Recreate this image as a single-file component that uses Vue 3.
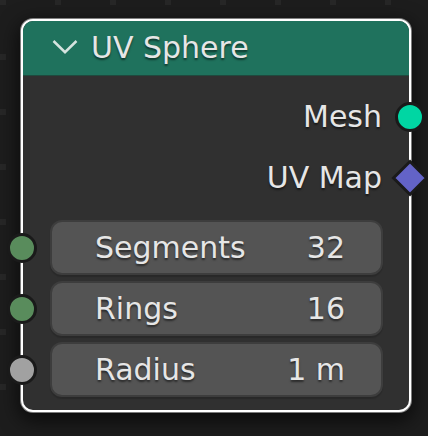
<script setup>
import { ref } from 'vue'

const open = ref(true)
const outputs = [
  { id: 'mesh', label: 'Mesh', shape: 'circle', tone: 'geometry' },
  { id: 'uv-map', label: 'UV Map', shape: 'diamond', tone: 'vector' }
]
const inputs = ref([
  { id: 'segments', label: 'Segments', value: '32', tone: 'integer' },
  { id: 'rings', label: 'Rings', value: '16', tone: 'integer' },
  { id: 'radius', label: 'Radius', value: '1 m', tone: 'float' }
])
</script>

<template>
  <main class="editor">
    <section class="node">
      <button class="header" type="button" :aria-expanded="open" @click="open = !open">
        <svg class="chevron" viewBox="0 0 26 16" aria-hidden="true">
          <path d="M1.5 2 L13 13.2 L24.5 2" />
        </svg>
        <span>UV Sphere</span>
      </button>
      <div v-if="open" class="body">
        <ul class="outputs">
          <li v-for="item in outputs" :key="item.id" class="output">
            <span>{{ item.label }}</span>
            <svg class="socket right" :class="item.tone" viewBox="0 0 38 38" aria-hidden="true">
              <circle v-if="item.shape === 'circle'" cx="19" cy="19" r="13.5" />
              <path v-else d="M19 2.5 L35.5 19 L19 35.5 L2.5 19 Z" />
            </svg>
          </li>
        </ul>
        <div class="inputs">
          <div v-for="item in inputs" :key="item.id" class="row">
            <svg class="socket left" :class="item.tone" viewBox="0 0 38 38" aria-hidden="true">
              <circle cx="19" cy="19" r="13.5" />
            </svg>
            <div class="field">
              <label :for="item.id">{{ item.label }}</label>
              <input :id="item.id" v-model="item.value" type="text" />
            </div>
          </div>
        </div>
      </div>
    </section>
  </main>
</template>

<style>
body {
  background: #1d1d1d;
}
</style>

<style scoped>
.editor {
  box-sizing: border-box;
  min-height: 100vh;
  padding: 19px 17px 24px 21px;
  overflow: hidden;
  background-color: #1d1d1d;
  background-image: conic-gradient(from 0deg at 6px 6px, transparent 270deg, #272727 270deg);
  background-size: 55px 55px;
  background-position: 0 -1px;
  color: #e6e6e6;
  font-family: "DejaVu Sans", sans-serif;
  font-size: 30px;
  text-shadow: 0 2px 2px rgba(0, 0, 0, 0.5);
}

.node {
  border: 2px solid #fff;
  border-radius: 12px;
  background: #303030;
  box-shadow: 0 0 0 1px rgba(255, 255, 255, 0.45), 0 6px 20px 2px rgba(0, 0, 0, 0.7);
}

.header {
  display: flex;
  align-items: center;
  gap: 13px;
  width: 100%;
  height: 54px;
  padding: 0 29px 2px;
  border: 0;
  border-radius: 10px 10px 0 0;
  background: #1f725d;
  box-shadow: 0 1px 0 #1f4a3e;
  color: inherit;
  font: inherit;
  text-align: left;
  text-shadow: inherit;
}

.chevron {
  flex: none;
  width: 26px;
  height: 16px;
  fill: none;
  stroke: #d5e3df;
  stroke-width: 2.5;
}

.body {
  padding: 11px 26px 13px 27px;
}

.outputs {
  margin: 0 0 12px;
  padding: 0;
  list-style: none;
}

.output {
  position: relative;
  display: flex;
  align-items: center;
  justify-content: flex-end;
  height: 61px;
  padding-right: 1px;
}

.inputs {
  display: grid;
  gap: 6px;
}

.row {
  position: relative;
}

.socket {
  position: absolute;
  top: 50%;
  width: 38px;
  height: 38px;
  margin-top: -19px;
  stroke: #1a1a1a;
  stroke-width: 3;
}

.left {
  left: -47px;
}

.right {
  right: -46px;
}

.geometry {
  fill: #00d6a3;
}

.vector {
  fill: #6363c7;
}

.integer {
  fill: #598c5c;
}

.float {
  fill: #a1a1a1;
}

.field {
  box-sizing: border-box;
  display: flex;
  align-items: center;
  height: 55px;
  padding: 0 36px 0 43px;
  border: 2px solid #3d3d3d;
  border-radius: 12px;
  background: #545454;
  box-shadow: 0 2px 1px rgba(0, 0, 0, 0.15);
}

input {
  flex: 1;
  min-width: 0;
  width: 0;
  padding: 0;
  border: 0;
  outline: 0;
  background: none;
  color: inherit;
  font: inherit;
  text-align: right;
  text-shadow: inherit;
}
</style>
